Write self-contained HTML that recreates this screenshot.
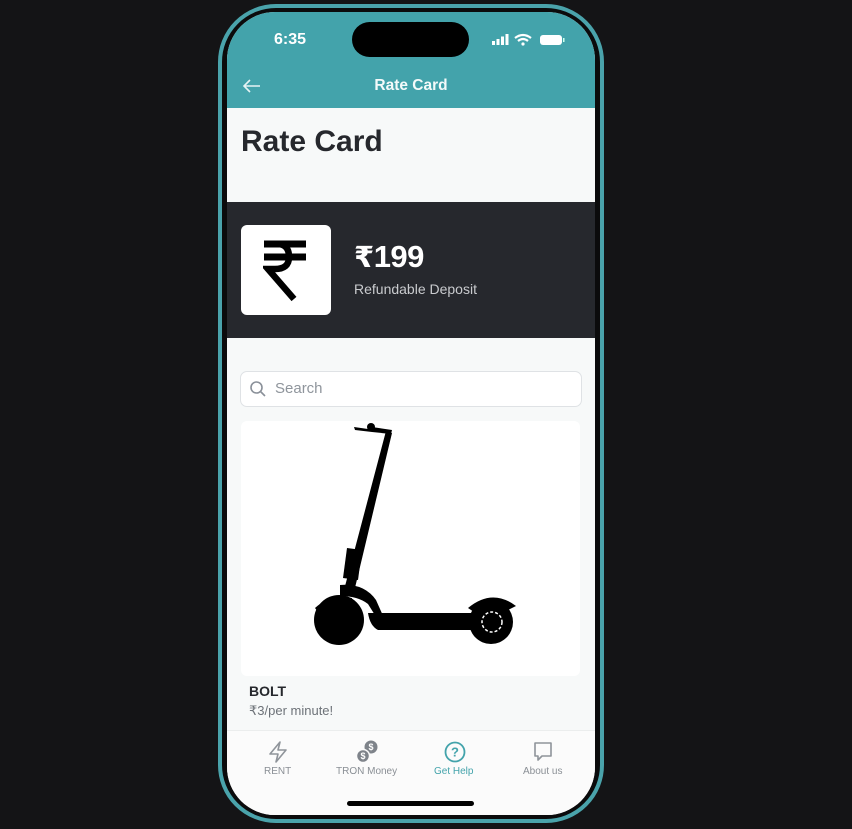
<!DOCTYPE html>
<html><head><meta charset="utf-8"><style>
*{margin:0;padding:0;box-sizing:border-box}
body{width:852px;height:829px;background:#141416;position:relative;overflow:hidden;font-family:"Liberation Sans","Noto Sans CJK SC",sans-serif}
.frame{position:absolute;left:218px;top:4px;width:386px;height:819px;border-radius:58px;border:4px solid #4aa3ab;background:#0b0b0c}
.screen{position:absolute;left:227px;top:12px;width:368px;height:803px;border-radius:48px;overflow:hidden;background:#f7f9f9}
.abs{position:absolute}
</style></head><body>
<div class="frame"></div>
<div class="screen">
  <div class="abs" style="left:0;top:0;width:368px;height:96px;background:#43a3ab"></div>
  <div class="abs" style="left:125px;top:10px;width:117px;height:35px;border-radius:18px;background:#000"></div>
  <div class="abs" style="left:47px;top:19px;color:#fff;font-weight:bold;font-size:16px">6:35</div>
  <svg class="abs" style="left:263px;top:21px" width="76" height="14" viewBox="0 0 76 14">
    <rect x="2" y="8" width="3" height="4" fill="#fff"/><rect x="6.5" y="6" width="3" height="6" fill="#fff"/><rect x="11" y="3.5" width="3" height="8.5" fill="#fff"/><rect x="15.5" y="1" width="3" height="11" fill="#fff"/>
    <path d="M25 5 Q33 -1 41 5" stroke="#fff" stroke-width="2.2" fill="none"/><path d="M28 8 Q33 4 38 8" stroke="#fff" stroke-width="2.2" fill="none"/><circle cx="33" cy="11" r="1.6" fill="#fff"/>
    <rect x="50" y="2" width="22" height="10" rx="3" fill="#fff"/><rect x="73" y="5" width="1.5" height="4" fill="#cfe"/>
  </svg>
  <svg class="abs" style="left:15px;top:66px" width="20" height="16" viewBox="0 0 20 16"><path d="M18 8H2M8 2L2 8L8 14" stroke="#e6f3f4" stroke-width="1.6" fill="none"/></svg>
  <div class="abs" style="left:0;width:368px;top:65px;text-align:center;color:#f4fafa;font-weight:bold;font-size:15.5px">Rate Card</div>

  <div class="abs" style="left:14px;top:113px;color:#26282d;font-weight:bold;font-size:30px">Rate Card</div>

  <div class="abs" style="left:0;top:190px;width:368px;height:136px;background:#26282d"></div>
  <div class="abs" style="left:14px;top:213px;width:90px;height:90px;border-radius:6px;background:#fff"></div>
  <svg class="abs" style="left:36px;top:228px" width="46" height="62" viewBox="0 0 46 62">
    <g fill="none" stroke="#000" stroke-linecap="butt">
      <path d="M1 4H43M1 17H43" stroke-width="7"/>
      <path d="M8 4H14Q26 4 26 17Q26 29 12 29H5L31 59" stroke-width="6.5" stroke-linejoin="miter"/>
    </g>
  </svg>
  <div class="abs" style="left:127px;top:227px;color:#fff;font-weight:bold;font-size:31px;letter-spacing:-0.5px"><span style="font-family:'DejaVu Sans',sans-serif;font-size:29px">₹</span>199</div>
  <div class="abs" style="left:127px;top:269px;color:#c9cbce;font-size:14px">Refundable Deposit</div>

  <div class="abs" style="left:13px;top:359px;width:342px;height:36px;border:1px solid #dfe2e5;border-radius:7px;background:#fff"></div>
  <svg class="abs" style="left:22px;top:368px" width="18" height="18" viewBox="0 0 18 18"><circle cx="7.5" cy="7.5" r="5.5" stroke="#8a9099" stroke-width="1.6" fill="none"/><path d="M11.5 11.5L16 16" stroke="#8a9099" stroke-width="1.6"/></svg>
  <div class="abs" style="left:48px;top:368px;color:#8f959c;font-size:15px">Search</div>

  <div class="abs" style="left:14px;top:409px;width:339px;height:255px;border-radius:6px;background:#fff"></div>
  <svg class="abs" style="left:0;top:0" width="368" height="700" viewBox="227 12 368 700">
    <g fill="#000">
      <path d="M354 427 L368 429 L372 427 L392 430 L391 434 L372 432 L355 430 Z"/>
      <circle cx="371" cy="427" r="4"/>
      <path d="M386 431 L392 433 L354 592 L344 590 Z"/>
      <path d="M347 548 L362 550 L358 580 L343 578 Z"/>
      <path d="M340 585 Q364 583 376 600 L384 618 L378 620 L368 604 Q358 596 340 596 Z"/>
      <path d="M368 613 L480 613 L482 630 L378 630 Q370 626 368 613 Z"/>
      <circle cx="339" cy="620" r="25"/>
      <path d="M315 608 Q330 594 352 598 L350 606 Q332 602 318 612 Z"/>
      <path d="M468 608 Q492 588 516 606 L508 610 Q490 596 474 612 Z"/>
      <circle cx="491" cy="622" r="22"/>
    </g>
    <circle cx="492" cy="622" r="10" fill="none" stroke="#fff" stroke-width="1.5" stroke-dasharray="3 2"/>
  </svg>

  <div class="abs" style="left:22px;top:671px;color:#26282d;font-weight:bold;font-size:14px">BOLT</div>
  <div class="abs" style="left:22px;top:691px;color:#6d7278;font-size:13px">₹3/per minute!</div>

  <div class="abs" style="left:0;top:718px;width:368px;height:85px;background:#fbfbfb;border-top:1px solid #ebeded"></div>
  <svg class="abs" style="left:40px;top:728px" width="22" height="24" viewBox="0 0 22 24"><path d="M13 2L3 14H11L9 22L19 10H11Z" stroke="#8f949a" stroke-width="1.6" fill="none" stroke-linejoin="round"/></svg>
  <div class="abs" style="left:37px;top:754px;color:#8a8f95;font-size:10px">RENT</div>
  <svg class="abs" style="left:127px;top:727px" width="26" height="26" viewBox="0 0 26 26"><circle cx="17" cy="8" r="6.5" fill="#7e838a"/><circle cx="9" cy="17" r="6.5" fill="#7e838a" stroke="#fbfbfb" stroke-width="1.5"/><text x="17" y="11" font-size="9" fill="#fff" text-anchor="middle" font-weight="bold" font-family="Liberation Sans">$</text><text x="9" y="20" font-size="9" fill="#fff" text-anchor="middle" font-weight="bold" font-family="Liberation Sans">$</text></svg>
  <div class="abs" style="left:109px;top:754px;color:#8a8f95;font-size:10px">TRON Money</div>
  <svg class="abs" style="left:217px;top:729px" width="22" height="22" viewBox="0 0 22 22"><circle cx="11" cy="11" r="9.5" stroke="#43a3ab" stroke-width="1.8" fill="none"/><text x="11" y="15.5" font-size="13" fill="#43a3ab" text-anchor="middle" font-weight="bold" font-family="Liberation Sans">?</text></svg>
  <div class="abs" style="left:207px;top:754px;color:#43a3ab;font-size:10px">Get Help</div>
  <svg class="abs" style="left:305px;top:729px" width="22" height="22" viewBox="0 0 22 22"><path d="M3 2H19V15H10L6 19V15H3Z" stroke="#8f949a" stroke-width="1.6" fill="none" stroke-linejoin="round"/></svg>
  <div class="abs" style="left:296px;top:754px;color:#8a8f95;font-size:10px">About us</div>
  <div class="abs" style="left:120px;top:789px;width:127px;height:5px;border-radius:3px;background:#000"></div>
</div>
</body></html>
